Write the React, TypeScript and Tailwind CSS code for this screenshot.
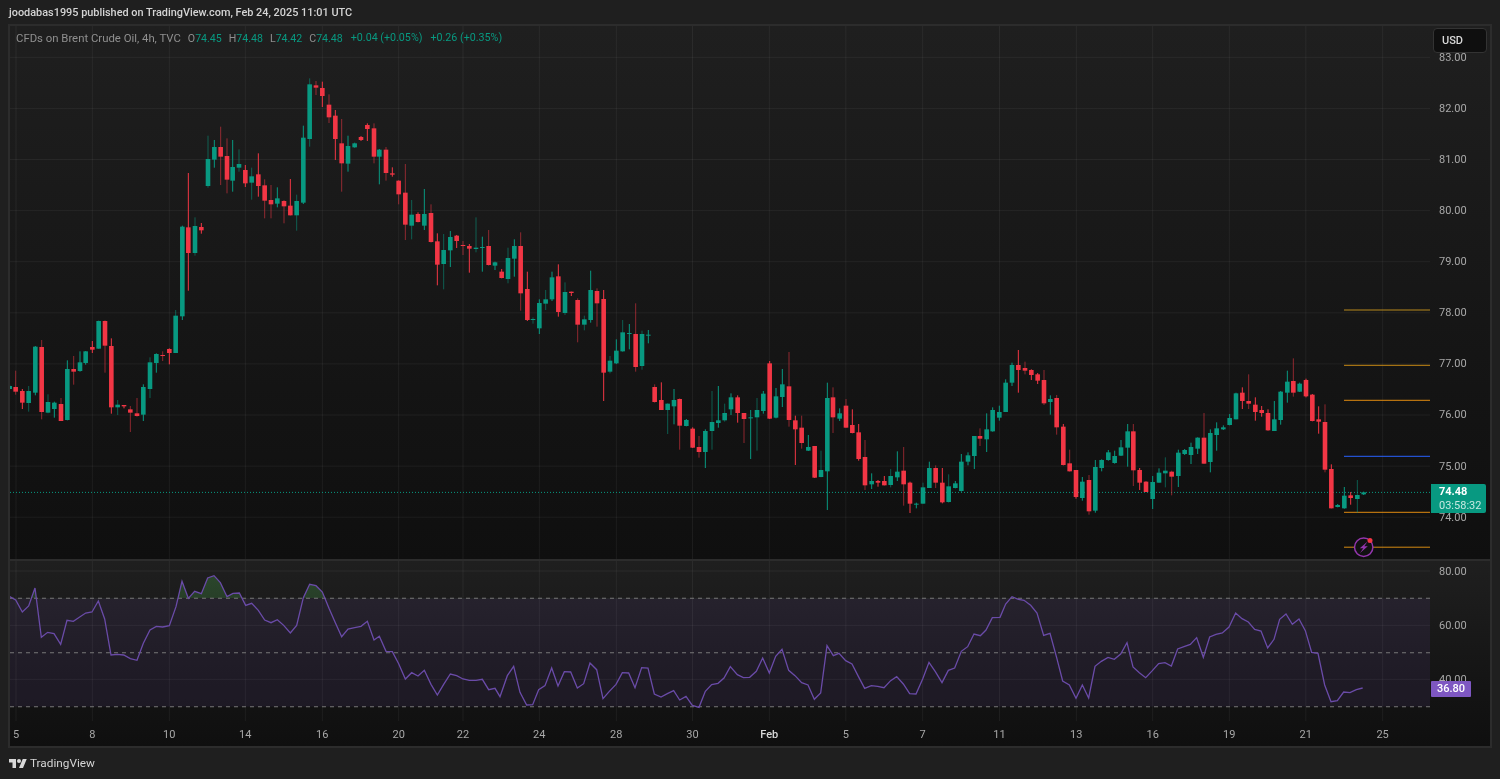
import React from "react";

type Row = number[];
const FONT = "font-['Roboto',sans-serif]";

// [x, wickTop, bodyTop, bodyBottom, wickBottom, green(1)/red(0), dimWick?] in 3x crop coordinates
const sec = (ox: number, oy: number, rows: Row[]) =>
  rows.map((r) => ({
    x: ox + r[0] / 3,
    wt: oy + r[1] / 3,
    bt: oy + r[2] / 3,
    bb: oy + r[3] / 3,
    wb: oy + r[4] / 3,
    up: r[5] === 1,
    dim: r[6] === 1,
  }));

const candles = [
  ...sec(0, 200, [
    [29,554,558,567,568,1],[47,512,561,575,584,0,1],[67,567,573,608,627,0],[86,558,573,609,635,1,1],[106,438,440,578,586,1],[125,420,441,636,658,0,1],[144,583,606,638,640,1,1],[163,605,608,627,653,1],[183,594,612,663,663,0,1],[202,481,507,660,661,1],[221,468,507,515,554,0,1],[240,454,487,513,515,1],[257,453,454,489,494,1],[277,423,441,449,459,0],[296,362,363,446,446,1],[315,361,363,437,518,0,1],[334,415,438,622,641,0],[353,600,614,622,645,1,1],[372,615,615,619,625,0],[391,618,628,638,696,0,1],[411,594,640,648,650,0,1],[430,553,561,644,663,1],[450,472,487,567,594,1,1],[469,460,462,489,518,1],[488,454,465,467,483,0,1],[508,445,447,459,493,0],[527,330,347,459,459,1,1],[547,77,80,349,360,1],[565,-81,82,159,272,0],[585,52,78,159,167,1,1],[604,69,81,91,101,0],
  ]),
  ...sec(0, 0, [
    [624,407,477,558,563,1,1],[643,420,441,479,503,1],[662,380,441,470,555,0,1],[681,415,468,539,580,0,1],[698,420,501,542,575,1],[717,448,492,503,515,1,1],[736,495,510,550,561,0],[755,503,529,548,599,1,1],[775,460,523,558,590,0],[794,538,556,602,655,0,1],[813,555,600,613,655,0,1],[832,562,595,611,622,1],[852,600,603,619,670,0,1],[871,537,617,646,646,0],[890,584,603,646,692,1,1],[910,377,413,608,612,1],[929,235,253,417,440,1,1],[948,243,256,263,285,0,1],[967,245,264,288,321,0],[987,283,314,352,369,0,1],[1006,330,347,417,480,0],[1025,357,430,490,575,0,1],[1044,407,438,491,515,1],[1064,428,430,442,443,1],[1083,408,411,420,423,0],[1102,370,375,387,423,0],[1122,370,385,470,490,0,1],[1138,447,449,470,553,1],[1158,441,449,519,542,0,1],[1177,502,520,524,530,0],[1196,540,542,583,613,0,1],[1216,492,578,674,720,0,1],[1235,600,644,677,718,1,1],[1254,637,642,666,667,0],[1273,567,642,677,690,1],[1293,613,639,726,728,0,1],
  ]),
  ...sec(0, 200, [
    [1312,100,124,194,256,0],[1331,102,150,192,268,1,1],[1351,93,111,151,201,1],[1370,105,107,123,144,0],[1389,123,135,137,165,0,1],[1408,132,138,146,218,0],[1428,52,143,147,157,1,1],[1447,110,141,144,215,1],[1466,90,138,195,197,0,1],[1485,185,187,197,210,1],
  ]),
  ...sec(490, 220, [
    [35,147,155,174,175,0],[54,83,114,177,190,1,1],[73,58,78,116,170,1],[92,37,78,220,272,0,1],[112,155,207,300,303,0],[129,292,297,300,311,1,1],[148,238,249,325,342,1],[167,210,238,251,270,1,1],[186,155,172,238,243,1],[205,133,169,276,290,0],[225,187,216,279,285,1,1],[244,215,215,219,228,0],[263,235,240,314,367,0,1],[283,287,298,314,331,1,1],[302,152,210,300,308,1],[321,205,213,250,320,0,1],[341,210,237,458,543,0],[360,408,422,455,460,1,1],[379,358,392,430,432,1],[398,300,337,394,396,1,1],[418,312,339,342,388,1],[437,250,342,441,455,0,1],[456,332,342,438,449,1,1],[475,330,344,347,370,1],[494,493,501,546,548,0,1],[514,487,540,570,570,0],[533,550,551,570,642,1,1],[552,507,540,559,613,1],[569,535,537,617,689,0,1],[589,597,600,618,619,1],[608,622,626,683,684,0],[627,648,681,696,713,0,1],[646,628,633,696,744,1],[666,513,606,633,689,1,1],[685,498,601,609,623,1],[704,551,579,601,605,1,1],[723,520,532,568,585,1],[743,526,532,579,608,0],[762,579,579,597,669,0,1],[782,570,592,595,717,1],[801,534,570,592,692,1,1],[820,513,521,573,581,1],[839,423,430,596,597,0],[858,504,529,593,595,1],[877,447,493,531,561,1],[897,396,499,600,620,0,1],[916,587,601,628,735,0],[935,587,623,669,686,0,1],[955,645,681,692,693,1],[974,678,678,773,774,0],[993,692,750,771,772,1,1],[1012,488,534,754,870,1],[1029,502,532,592,639,0,1],[1049,565,580,596,603,1],[1068,537,557,623,624,0,1],[1087,568,615,639,640,0],[1106,612,637,717,722,0],[1125,660,711,796,810,0,1],[1145,760,783,793,807,1],[1164,780,783,788,800,0],[1183,768,783,796,796,0],[1202,747,768,795,802,1,1],[1222,694,755,772,783,1],[1241,681,752,793,857,0,1],[1260,785,788,851,879,0],[1279,848,851,854,865,1],[1299,788,802,851,852,1,1],[1318,725,744,804,804,1],[1337,736,744,788,804,0,1],[1357,744,788,847,850,0],[1376,763,799,846,848,1,1],[1396,783,790,804,805,1],[1414,702,725,813,815,1],[1434,697,706,725,736,1],[1453,648,648,708,747,1],[1470,625,648,656,678,0,1],[1490,580,628,658,696,1],
  ]),
  ...sec(980, 340, [
    [38,202,210,274,275,1],[58,197,216,233,242,1],[77,118,128,216,216,1],[96,68,75,128,138,1],[115,30,75,90,158,0],[135,65,84,92,103,0,1],[154,88,90,105,120,0],[173,99,103,122,132,0],[192,90,120,190,195,0,1],[211,166,177,186,224,1],[230,165,174,262,284,0,1],[250,252,260,375,376,0],[269,329,370,394,395,0,1],[288,390,390,471,476,0],[307,411,425,474,482,1],[327,405,420,514,524,0,1],[346,360,381,512,518,1],[365,358,360,384,394,1],[385,330,337,360,362,1],[404,332,348,369,371,1],[423,300,322,347,348,1],[443,252,274,323,380,1],[460,252,274,391,438,0,1],[479,384,390,428,450,0],[498,424,425,456,456,0],[518,408,426,477,507,1],[537,385,398,428,428,1],[556,352,392,400,442,1,1],[575,392,395,410,466,0,1],[595,329,338,408,441,1],[614,327,330,342,345,1],[633,308,321,345,372,1],[653,292,293,326,342,1],[672,219,293,371,372,0,1],[691,268,279,366,397,1],[710,247,265,285,332,1],[730,256,262,268,270,1],[749,222,234,255,256,1],[768,158,160,238,238,1],[787,142,158,183,207,0],[806,103,183,191,207,0,1],[826,172,194,216,242,0],[845,198,210,219,230,0],[864,208,219,271,272,0],[883,183,238,273,273,1],[902,153,155,240,254,1],[922,92,125,158,188,1],[940,55,123,158,170,0,1],[959,128,131,155,156,1],[978,116,120,169,172,0],[997,162,164,243,244,0],[1016,199,238,245,281,0],[1035,193,246,389,397,0,1],[1054,373,387,505,505,0],[1073,492,495,501,502,1],[1093,441,467,505,506,1],[1112,456,466,474,494,0],[1132,420,465,477,518,1,1],[1151,455,457,463,465,1],
  ]),
];

const rsiSec = (ox: number, rows: Row[]) => rows.map(([x, y]) => [ox + x / 3, 555 + y / 3]);
const rsi = [
  ...rsiSec(0, [[29,125],[47,135],[67,171],[86,153],[105,99],[124,247],[143,232],[162,236],[182,268],[201,196],[220,199],[238,187],[257,174],[276,171],[295,138],[314,192],[333,300],[352,298],[371,300],[391,311],[411,316],[430,265],[450,225],[469,214],[488,216],[508,212],[528,155],[546,79],[565,130],[584,109],[604,116],[623,69],[642,62],[661,83],[681,125],[699,115],[718,114],[737,151],[755,145],[775,166],[794,195],[813,203],[832,194],[851,211],[871,234],[890,211],[910,128],[929,88],[948,92],[967,111],[987,160],[1006,203],[1025,245],[1044,222],[1064,218],[1083,214],[1102,199],[1122,255],[1138,244],[1158,289],[1177,290],[1196,326],[1216,372],[1235,353],[1254,363],[1273,346],[1293,388],[1312,420],[1331,388],[1351,357],[1370,362],[1389,372],[1408,376],[1428,376],[1447,373],[1466,404],[1485,400]]),
  ...rsiSec(500, [[0,425],[22,362],[41,334],[60,412],[80,450],[98,449],[116,404],[135,392],[155,339],[174,393],[193,350],[212,351],[232,399],[251,386],[270,324],[290,344],[309,431],[328,409],[348,388],[367,353],[386,354],[405,398],[425,338],[444,339],[463,417],[483,426],[502,416],[521,407],[539,435],[558,424],[577,451],[597,457],[616,409],[635,389],[654,385],[672,369],[691,335],[712,359],[730,368],[749,367],[769,349],[788,309],[808,354],[827,304],[846,283],[866,346],[885,362],[905,383],[924,390],[943,433],[962,414],[981,272],[1000,302],[1017,295],[1037,317],[1056,327],[1075,364],[1094,400],[1114,392],[1133,394],[1152,398],[1172,377],[1190,365],[1210,387],[1229,416],[1248,417],[1268,372],[1287,322],[1306,350],[1326,383],[1345,346],[1364,339],[1384,289],[1403,275],[1422,237],[1441,242],[1458,225],[1477,188]]),
  ...rsiSec(1000, [[0,187],[17,147],[36,125],[55,133],[72,136],[92,151],[111,174],[131,241],[150,235],[170,308],[188,378],[208,390],[228,430],[247,390],[266,429],[285,334],[304,319],[324,307],[343,313],[362,297],[381,263],[399,336],[418,353],[437,368],[457,347],[476,326],[495,323],[514,333],[533,282],[552,275],[571,268],[590,248],[610,307],[629,246],[648,238],[667,234],[687,216],[707,174],[726,191],[745,201],[764,223],[783,228],[803,279],[822,253],[839,193],[858,177],[877,208],[897,192],[916,227],[935,292],[954,295],[974,390],[993,440],[1012,437],[1031,411],[1050,413],[1069,404],[1088,399]]),
];
const rsiPts = rsi.map((p) => p.join(",")).join(" ");

const vGrid = [16, 92.3, 169.3, 245.3, 322.3, 398.7, 463, 539.3, 616.3, 692.5, 769.3, 845.8, 922.7, 999.5, 1076.3, 1152.7, 1229.3, 1305.8, 1382.7];
const timeLabels = ["5", "8", "10", "14", "16", "20", "22", "24", "28", "30", "Feb", "5", "7", "11", "13", "16", "19", "21", "25"];
const priceLabels = ["83.00", "82.00", "81.00", "80.00", "79.00", "78.00", "77.00", "76.00", "75.00", "74.00"];
const hGrid = priceLabels.map((_, i) => 57.3 + i * 51.1);
const levels: [number, string][] = [[310, "#b8891c"], [365.3, "#c98a14"], [400.3, "#e08a10"], [456.3, "#2962ff"], [512.3, "#e08a10"], [547.2, "#d68a12"]];

const GRID = "rgba(255,255,255,0.055)";

function PriceChart() {
  return (
    <svg className="block" width={1420} height={533} viewBox="10 26 1420 533">
      {vGrid.map((x) => <line key={x} x1={x} x2={x} y1={26} y2={559} stroke={GRID} />)}
      {hGrid.map((y) => <line key={y} x1={10} x2={1430} y1={y} y2={y} stroke={GRID} />)}
      <line x1={10} x2={1430} y1={492.4} y2={492.4} stroke="#089981" strokeDasharray="1 2" />
      {levels.map(([y, c]) => <line key={y} x1={1344} x2={1430} y1={y} y2={y} stroke={c} />)}
      {candles.map((c, i) => {
        const col = c.up ? "#089981" : "#f23645";
        return (
          <g key={i}>
            <rect x={c.x - 0.5} y={c.wt} width={1} height={c.wb - c.wt} fill={col} opacity={c.dim ? 0.55 : 1} />
            <rect x={c.x - 2.3} y={c.bt} width={4.6} height={Math.max(c.bb - c.bt, 1)} fill={col} />
          </g>
        );
      })}
      <circle cx={1363.7} cy={547.3} r={9.2} fill="#111111" stroke="#9336ad" strokeWidth={1.5} />
      <path d="M1367.6 541.6L1359.8 548.3H1363.3L1360 553L1367.8 546.3H1364.3Z" fill="#9336ad" />
      <circle cx={1370} cy={540.6} r={2.5} fill="#f23645" />
    </svg>
  );
}

function RsiChart() {
  const y70 = 598.3;
  return (
    <svg className="block" width={1420} height={160} viewBox="10 561 1420 160">
      <defs>
        <clipPath id="above70"><rect x={10} y={561} width={1420} height={y70 - 561} /></clipPath>
        <linearGradient id="ob" x1="0" x2="0" y1="0" y2="1">
          <stop offset="0" stopColor="#4caf50" stopOpacity={0.28} />
          <stop offset="1" stopColor="#4caf50" stopOpacity={0.03} />
        </linearGradient>
      </defs>
      <rect x={10} y={y70} width={1420} height={108.4} fill="#7e57c2" fillOpacity={0.1} />
      {vGrid.map((x) => <line key={x} x1={x} x2={x} y1={561} y2={721} stroke={GRID} />)}
      {[571, 625.3, 679.3].map((y) => <line key={y} x1={10} x2={1430} y1={y} y2={y} stroke={GRID} />)}
      <polygon points={`10,${y70} ${rsiPts} 1363,${y70}`} fill="url(#ob)" clipPath="url(#above70)" />
      {[598.3, 652.7, 706.7].map((y) => <line key={y} x1={10} x2={1430} y1={y} y2={y} stroke="#777777" strokeWidth={1.1} strokeDasharray="4 4" />)}
      <polyline points={rsiPts} fill="none" stroke="#6a4ba8" strokeWidth={1.3} />
    </svg>
  );
}

function TvLogo() {
  return (
    <svg width={18} height={14} viewBox="0 0 36 28" fill="#d8d8d8">
      <path d="M14 22H7V11H0V4h14v18zM28 22h-8l7.5-18h8L28 22z" />
      <circle cx="20" cy="8" r="4" />
    </svg>
  );
}

export default function App() {
  return (
    <div className={`w-[1500px] h-[779px] overflow-hidden bg-[#1f1f1f] flex flex-col ${FONT} blur-[0.35px]`}>
      <div className="h-[24px] pl-[9px] pt-[2px] flex items-center text-[10.9px] font-medium text-[#d4d4d4] whitespace-nowrap">
        joodabas1995 published on TradingView.com, Feb 24, 2025 11:01 UTC
      </div>

      <div className="ml-[8px] w-[1484px] h-[724px] border-2 border-[#2c2c2c] flex flex-col">
        <div className="h-[533px] flex relative bg-linear-to-b from-[#1f1f1f] to-[#0f0f0f]">
          <PriceChart />
          <div className="w-[60px] overflow-hidden pt-[6.5px] pl-[9px] text-[11px] text-[#a8a8a8]">
            {priceLabels.map((p) => (
              <div key={p} className="h-[51.1px] flex items-center">{p}</div>
            ))}
          </div>

          <div className="absolute left-[6px] top-[4px] flex items-center gap-[7px] text-[11.35px] text-[#8f8f8f] whitespace-nowrap">
            <span>CFDs on Brent Crude Oil, 4h, TVC</span>
            <span className="flex gap-[7px] text-[10.6px]">
              <span>O<span className="text-[#089981]">74.45</span></span>
              <span>H<span className="text-[#089981]">74.48</span></span>
              <span>L<span className="text-[#089981]">74.42</span></span>
              <span>C<span className="text-[#089981]">74.48</span></span>
            </span>
            <span className="text-[#089981] text-[10.7px] ml-[1px]">+0.04 (+0.05%)</span>
            <span className="text-[#089981] text-[10.7px] ml-[1px]">+0.26 (+0.35%)</span>
          </div>

          <div className="absolute left-[1423px] top-[2px] w-[54px] h-[25px] pl-[8px] pt-[1px] flex items-center rounded-[4px] border border-[#333333] bg-[#0f0f0f] text-[11px] font-medium text-[#d8d8d8]">
            USD
          </div>

          <div className="absolute left-[1421px] top-[458px] w-[55px] h-[29px] pl-[8px] flex flex-col justify-center rounded-r-[2px] bg-[#089981] text-[11px] leading-[13.5px]">
            <span className="font-bold text-white">74.48</span>
            <span className="text-[#c5e8e1]">03:58:32</span>
          </div>
        </div>

        <div className="h-[2px] bg-[#2c2c2c]" />

        <div className="flex-1 flex flex-col bg-linear-to-b from-[#1f1f1f] to-[#0f0f0f]">
          <div className="h-[160px] flex relative">
            <RsiChart />
            <div className="w-[60px] pl-[9px] text-[11px] text-[#a8a8a8]">
              {["80.00", "60.00", "40.00"].map((p, i) => (
                <div key={p} className={`h-[54.2px] flex items-center ${i === 0 ? "-mt-[16px]" : ""}`}>{p}</div>
              ))}
            </div>
            <div className="absolute left-[1421px] top-[120px] w-[40px] h-[15.5px] flex items-center justify-center rounded-[1px] bg-[#7e57c2] text-[11px] font-medium text-white">
              36.80
            </div>
          </div>
          <div className="flex-1 flex items-center pt-[4px] text-[11px] text-[#a8a8a8]">
            {vGrid.map((x, i) => (
              <div
                key={i}
                className={`w-0 flex justify-center ${timeLabels[i] === "Feb" ? "text-[#d8d8d8] font-medium" : ""}`}
                style={{ marginLeft: i === 0 ? x - 10 : x - vGrid[i - 1] }}
              >
                {timeLabels[i]}
              </div>
            ))}
          </div>
        </div>
      </div>

      <div className="flex-1 pl-[9px] flex items-center gap-[3px] text-[11.8px] text-[#d4d4d4]">
        <TvLogo />
        <span>TradingView</span>
      </div>
    </div>
  );
}
